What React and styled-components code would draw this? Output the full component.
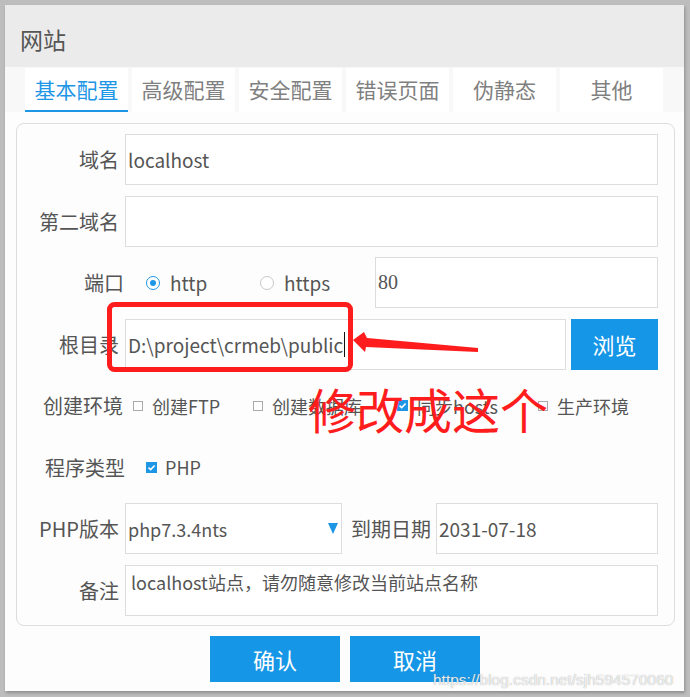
import React from "react";
import styled, { createGlobalStyle } from "styled-components";

const Global = createGlobalStyle`
  html, body { margin: 0; padding: 0; }
  body {
    background: #bdbdbd;
    font-family: "Noto Sans CJK SC", "Noto Sans", sans-serif;
    width: 690px;
    height: 697px;
    overflow: hidden;
  }
`;

const Dialog = styled.div`
  position: relative;
  margin: 5px 6px 0 5px;
  width: 679px;
  height: 686px;
  background: #fdfdfd;
  box-shadow: 1px 2px 3px rgba(0, 0, 0, 0.25);
  display: flex;
  flex-direction: column;
`;

const Header = styled.div`
  height: 62px;
  box-sizing: border-box;
  padding: 6px 0 0 15px;
  background: #ebebeb;
  display: flex;
  align-items: center;
  font-size: 23px;
  color: #555;
`;

const TabBar = styled.div`
  display: flex;
  gap: 4px;
  padding: 1px 0 0 20px;
  height: 45px;
  box-sizing: border-box;
  background: #f8f8f8;
`;

const Tab = styled.div`
  width: 103px;
  box-sizing: border-box;
  background: #fff;
  display: flex;
  align-items: center;
  justify-content: center;
  font-size: 21px;
  color: ${(p) => (p.$active ? "#1e96e6" : "#808080")};
  border-bottom: 2px solid ${(p) => (p.$active ? "#1e96e6" : "transparent")};
`;

const Panel = styled.div`
  margin: 11px 9px 0 11px;
  height: 503px;
  box-sizing: border-box;
  border: 1px solid #ddd;
  border-radius: 8px;
  padding: 10px 16px 0 0;
  display: flex;
  flex-direction: column;
  gap: 10.5px;
`;

const Row = styled.div`
  height: 51px;
  display: flex;
  align-items: center;
`;

const Label = styled.div`
  width: ${(p) => p.$w || 102}px;
  flex-shrink: 0;
  text-align: right;
  font-size: 20px;
  color: #555;
  white-space: nowrap;
`;

const Field = styled.div`
  ${(p) => (p.$w ? `width: ${p.$w}px; flex-shrink: 0;` : "flex: 1;")}
  height: 100%;
  box-sizing: border-box;
  margin-left: ${(p) => (p.$ml ?? 6)}px;
  border: 1px solid #ddd;
  background: #fff;
  display: flex;
  align-items: ${(p) => (p.$top ? "flex-start" : "center")};
  padding: ${(p) => (p.$top ? "3px 0 0 5px" : "0 0 0 2px")};
  font-family: ${(p) =>
    p.$serif
      ? '"Liberation Serif", serif'
      : '"Noto Sans CJK SC", "Noto Sans", sans-serif'};
  font-size: ${(p) => p.$fs || 19}px;
  color: #555;
  white-space: nowrap;
`;

const SelectBox = styled(Field)`
  justify-content: space-between;
  padding-right: 3px;
  font-size: 18px;
`;

const Triangle = styled.span`
  width: 0;
  height: 0;
  border-left: 5px solid transparent;
  border-right: 5px solid transparent;
  border-top: 11px solid #1e96e6;
`;

const Caret = styled.span`
  display: inline-block;
  width: 1px;
  height: 25px;
  background: #111;
  margin-left: 1px;
`;

const Option = styled.div`
  width: ${(p) => p.$w}px;
  flex-shrink: 0;
  margin-left: ${(p) => p.$ml || 0}px;
  display: flex;
  align-items: center;
  gap: ${(p) => p.$gap || 9}px;
  font-size: ${(p) => p.$fs || 18}px;
  color: #555;
  white-space: nowrap;
`;

const Radio = styled.span`
  width: 14px;
  height: 14px;
  box-sizing: border-box;
  border-radius: 50%;
  border: 1px solid ${(p) => (p.$on ? "#1e96e6" : "#c8c8c8")};
  display: flex;
  align-items: center;
  justify-content: center;
  background: #fff;
  &::after {
    content: "";
    width: 6px;
    height: 6px;
    border-radius: 50%;
    background: ${(p) => (p.$on ? "#1e96e6" : "transparent")};
  }
`;

const Check = styled.span`
  width: ${(p) => (p.$on ? 11 : 10)}px;
  height: ${(p) => (p.$on ? 11 : 10)}px;
  box-sizing: border-box;
  border: 1px solid ${(p) => (p.$on ? "#1e96e6" : "#aaa")};
  background: ${(p) => (p.$on ? "#1e96e6" : "#fff")};
  display: flex;
  align-items: center;
  justify-content: center;
  flex-shrink: 0;
`;

const InlineLabel = styled.div`
  margin-left: ${(p) => p.$ml}px;
  font-size: 20px;
  color: #555;
  white-space: nowrap;
  flex-shrink: 0;
`;

const BlueButton = styled.div`
  width: ${(p) => p.$w || 130}px;
  height: ${(p) => p.$h || 46}px;
  margin-left: ${(p) => p.$ml || 0}px;
  flex-shrink: 0;
  background: #1696e6;
  color: #fff;
  font-size: 22px;
  display: flex;
  align-items: center;
  justify-content: center;
`;

const Footer = styled.div`
  margin-top: 10px;
  display: flex;
  justify-content: center;
  gap: 10px;
  padding-left: 1px;
`;

const Overlay = styled.svg`
  position: absolute;
  left: 0;
  top: 0;
  pointer-events: none;
`;

const RedNote = styled.div`
  position: absolute;
  left: 303px;
  top: 377px;
  font-size: 48px;
  line-height: 52px;
  color: #ff1c1c;
  font-family: "Noto Sans CJK SC", sans-serif;
  white-space: nowrap;
`;

const Watermark = styled.div`
  position: absolute;
  left: 428px;
  top: 666px;
  font-family: "Liberation Sans", Arial, sans-serif;
  font-size: 15.5px;
  color: rgba(255, 255, 255, 0.85);
  text-shadow: 0 0 1px rgba(120, 120, 120, 0.8);
  white-space: nowrap;
`;

const Tick = () => (
  <svg width="9" height="9" viewBox="0 0 9 9">
    <path d="M1.5 4.6 L3.7 6.6 L7.6 2.4" fill="none" stroke="#fff" strokeWidth="1.5" />
  </svg>
);

const tabs = ["基本配置", "高级配置", "安全配置", "错误页面", "伪静态", "其他"];

export default function App() {
  return (
    <>
      <Global />
      <Dialog>
        <Header>网站</Header>
        <TabBar>
          {tabs.map((t, i) => (
            <Tab key={t} $active={i === 0}>
              {t}
            </Tab>
          ))}
        </TabBar>
        <Panel>
          <Row>
            <Label>域名</Label>
            <Field>localhost</Field>
          </Row>
          <Row>
            <Label>第二域名</Label>
            <Field />
          </Row>
          <Row>
            <Label $w={107}>端口</Label>
            <Option $w={114} $ml={22} $gap={10} $fs={19}>
              <Radio $on />
              http
            </Option>
            <Option $w={115} $gap={10} $fs={19}>
              <Radio />
              https
            </Option>
            <Field $ml={0} $serif $fs={20}>
              80
            </Field>
          </Row>
          <Row>
            <Label>根目录</Label>
            <Field $w={441}>
              D:\project\crmeb\public
              <Caret />
            </Field>
            <BlueButton $w={87} $h={51} $ml={5}>
              浏览
            </BlueButton>
          </Row>
          <Row>
            <Label $w={106}>创建环境</Label>
            <Option $w={120} $ml={10}>
              <Check />
              创建FTP
            </Option>
            <Option $w={144}>
              <Check />
              创建数据库
            </Option>
            <Option $w={141}>
              <Check $on>
                <Tick />
              </Check>
              同步hosts
            </Option>
            <Option $w={110}>
              <Check />
              生产环境
            </Option>
          </Row>
          <Row>
            <Label $w={108}>程序类型</Label>
            <Option $w={100} $ml={21} $gap={8}>
              <Check $on>
                <Tick />
              </Check>
              PHP
            </Option>
          </Row>
          <Row>
            <Label>PHP版本</Label>
            <SelectBox $w={217}>
              php7.3.4nts
              <Triangle />
            </SelectBox>
            <InlineLabel $ml={9}>到期日期</InlineLabel>
            <Field $ml={5}>2031-07-18</Field>
          </Row>
          <Row>
            <Label>备注</Label>
            <Field $top $fs={18}>
              localhost站点，请勿随意修改当前站点名称
            </Field>
          </Row>
        </Panel>
        <Footer>
          <BlueButton>确认</BlueButton>
          <BlueButton>取消</BlueButton>
        </Footer>

        <Overlay width="679" height="686" viewBox="0 0 679 686">
          <rect
            x="104.5"
            y="299.5"
            width="241"
            height="65"
            rx="5"
            fill="none"
            stroke="#ff1c1c"
            strokeWidth="5"
          />
          <polygon
            points="348,335 359,327 362,333 473,343 473,347 361,342 360,347"
            fill="#ff1c1c"
          />
        </Overlay>
        <RedNote>修改成这个</RedNote>
        <Watermark>https://blog.csdn.net/sjh594570060</Watermark>
      </Dialog>
    </>
  );
}
